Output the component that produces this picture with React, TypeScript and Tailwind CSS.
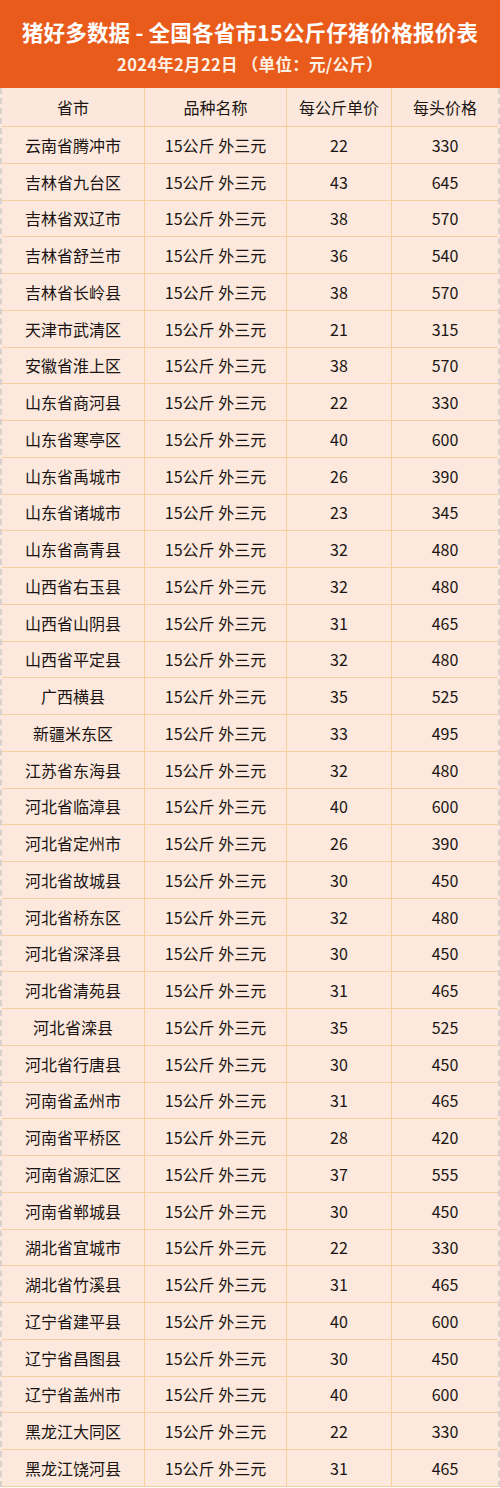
const rows: [string, number, number][] = [
  ["云南省腾冲市", 22, 330],
  ["吉林省九台区", 43, 645],
  ["吉林省双辽市", 38, 570],
  ["吉林省舒兰市", 36, 540],
  ["吉林省长岭县", 38, 570],
  ["天津市武清区", 21, 315],
  ["安徽省淮上区", 38, 570],
  ["山东省商河县", 22, 330],
  ["山东省寒亭区", 40, 600],
  ["山东省禹城市", 26, 390],
  ["山东省诸城市", 23, 345],
  ["山东省高青县", 32, 480],
  ["山西省右玉县", 32, 480],
  ["山西省山阴县", 31, 465],
  ["山西省平定县", 32, 480],
  ["广西横县", 35, 525],
  ["新疆米东区", 33, 495],
  ["江苏省东海县", 32, 480],
  ["河北省临漳县", 40, 600],
  ["河北省定州市", 26, 390],
  ["河北省故城县", 30, 450],
  ["河北省桥东区", 32, 480],
  ["河北省深泽县", 30, 450],
  ["河北省清苑县", 31, 465],
  ["河北省滦县", 35, 525],
  ["河北省行唐县", 30, 450],
  ["河南省孟州市", 31, 465],
  ["河南省平桥区", 28, 420],
  ["河南省源汇区", 37, 555],
  ["河南省郸城县", 30, 450],
  ["湖北省宜城市", 22, 330],
  ["湖北省竹溪县", 31, 465],
  ["辽宁省建平县", 40, 600],
  ["辽宁省昌图县", 30, 450],
  ["辽宁省盖州市", 40, 600],
  ["黑龙江大同区", 22, 330],
  ["黑龙江饶河县", 31, 465],
];

const font = { fontFamily: '"Noto Sans CJK SC", "Noto Sans", sans-serif' };

const cols = "grid grid-cols-[143px_142px_105px_1fr]";
const cell = "flex items-center justify-center border-r border-b border-[#f6cf9f] last:border-r-0";

export default function App() {
  return (
    <div className="w-[500px] h-[1488px] overflow-hidden bg-white" style={font}>
      <div className="h-[88px] bg-[#e95b1a] flex flex-col items-center text-white">
        <div className="mt-[17px] text-[21.5px] font-bold leading-[30px] tracking-[0.2px]">
          猪好多数据 - 全国各省市15公斤仔猪价格报价表
        </div>
        <div className="mt-[5px] text-[16.5px] font-bold leading-[24px] text-[#fdf0e4] tracking-[0.3px]">
          2024年2月22日 （单位：元/公斤）
        </div>
      </div>
      <div className="border-x-[2px] border-dashed border-x-[#d9d2cc] bg-[#fce8dd] text-[#1a1512]">
        <div className={`${cols} h-[39px] text-[16px] bg-[#fbe7db]`}>
          <div className={cell}>省市</div>
          <div className={cell}>品种名称</div>
          <div className={cell}>每公斤单价</div>
          <div className={cell}>每头价格</div>
        </div>
        {rows.map(([name, unit, head]) => (
          <div key={name} className={`${cols} h-[36.75px] text-[16px]`}>
            <div className={cell}>{name}</div>
            <div className={cell}>15公斤 外三元</div>
            <div className={cell}>{unit}</div>
            <div className={cell}>{head}</div>
          </div>
        ))}
      </div>
    </div>
  );
}
